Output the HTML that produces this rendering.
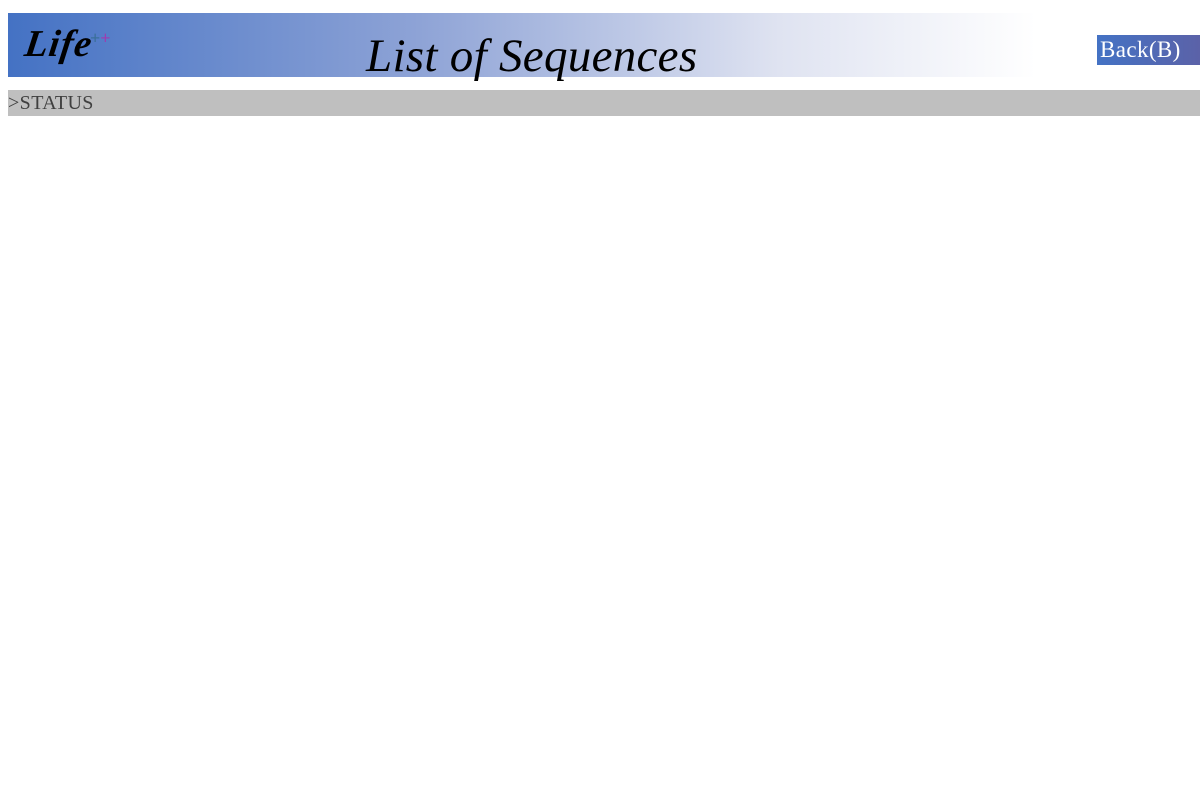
<!DOCTYPE html>
<html><head><style>
body{margin:0;width:1200px;height:800px;background:#fff;position:relative;overflow:hidden;font-family:"Liberation Serif",serif}
.hdr{position:absolute;left:8px;top:13px;width:1028px;height:64px;background:linear-gradient(to right,#4472c4 0%,#8ea3d6 40%,#dfe3f1 75%,#ffffff 100%)}
.logo{position:absolute;left:25px;top:25px;font-family:"Liberation Serif",serif;font-style:italic;font-weight:bold;font-size:38px;line-height:1;color:#000;letter-spacing:1px;transform:skewX(-8deg)}
.pp{position:absolute;left:90px;top:29px;font-size:18px;font-weight:bold;line-height:1}
.title{position:absolute;left:366px;top:33px;font-style:italic;font-size:47px;line-height:1;color:#000;letter-spacing:0.3px}
.back{position:absolute;left:1097px;top:35px;width:103px;height:30px;background:linear-gradient(to right,#4472c4,#5b62a8);color:#fff;font-size:23px;line-height:30px;padding-left:3px;box-sizing:border-box;letter-spacing:0.4px}
.status{position:absolute;left:8px;top:90px;width:1192px;height:26px;background:#bfbfbf;color:#404040;font-size:20px;line-height:27px;letter-spacing:0.4px}
</style></head><body>
<div class="hdr"></div>
<div class="logo">Life</div>
<div class="pp"><span style="color:#3a6f9a">+</span><span style="color:#9b3fb0">+</span></div>
<div class="title">List of Sequences</div>
<div class="back">Back(B)</div>
<div class="status">&gt;STATUS</div>
</body></html>
